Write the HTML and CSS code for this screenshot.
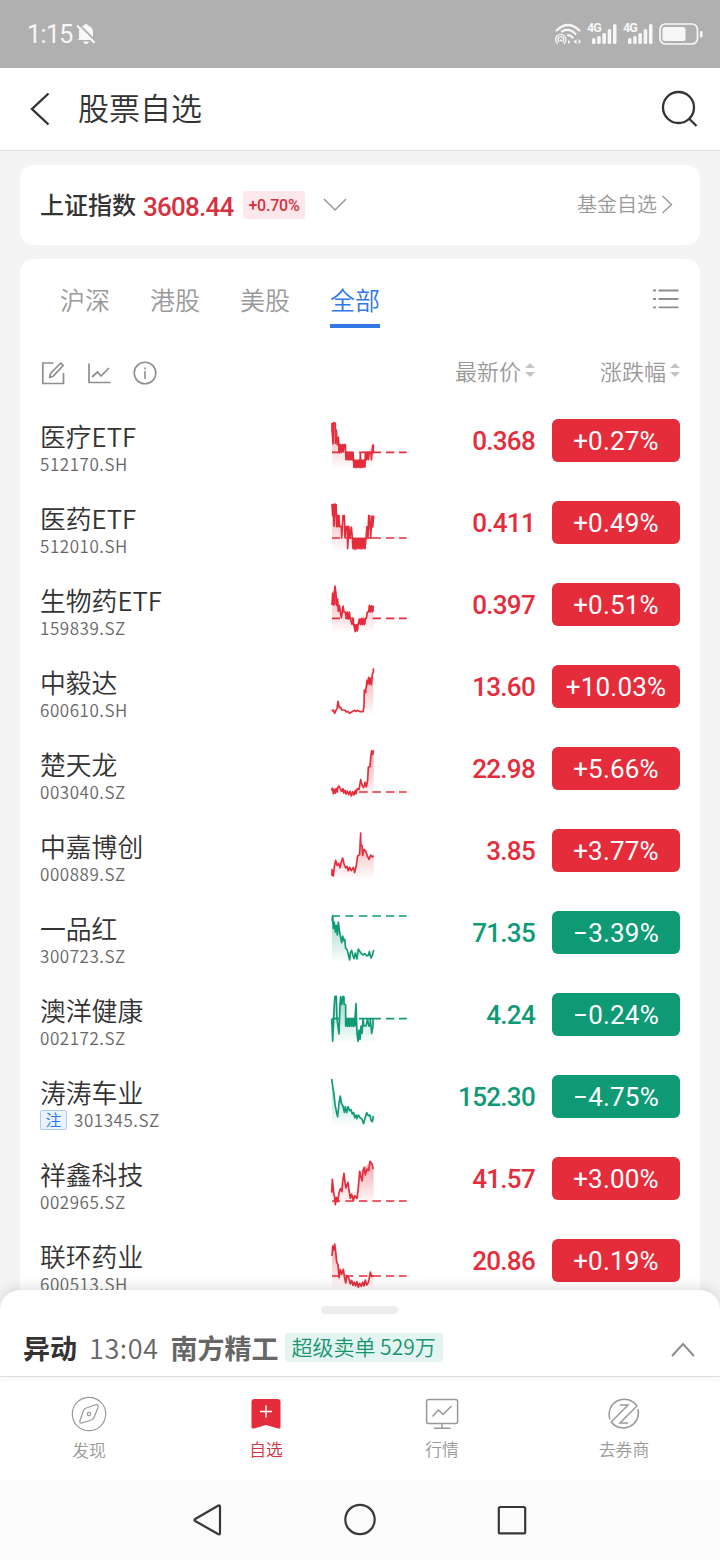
FILE: index.html
```html
<!DOCTYPE html>
<html lang="zh-CN">
<head>
<meta charset="utf-8">
<title>股票自选</title>
<link rel="stylesheet" href="styles.css">
</head>
<body>
<svg class="defs" aria-hidden="true">
  <defs>
    <linearGradient id="up" x1="0" y1="0" x2="0" y2="1"><stop offset="0" stop-color="#e52c3b" stop-opacity=".42"/><stop offset="1" stop-color="#e52c3b" stop-opacity=".02"/></linearGradient>
    <linearGradient id="down" x1="0" y1="0" x2="0" y2="1"><stop offset="0" stop-color="#0f9a76" stop-opacity=".42"/><stop offset="1" stop-color="#0f9a76" stop-opacity=".02"/></linearGradient>
    <symbol id="signal" viewBox="0 0 32 24">
      <g fill="#f7f7f7"><rect x="5" y="16" width="3.500" height="6" rx="1.500"/><rect x="10.200" y="14" width="3.500" height="8" rx="1.500"/><rect x="15.400" y="11" width="3.500" height="11" rx="1.500"/><rect x="20.700" y="7" width="3.500" height="15" rx="1.500"/><rect x="26" y="2" width="3.500" height="20" rx="1.500"/></g>
    </symbol>
  </defs>
</svg>

<header class="status">
  <span class="clock">1:15</span>
  <svg class="bell" viewBox="0 0 20 22" width="20" height="22"><path d="M3 17V9Q3 3 8 2.500Q8 1 10 1Q12 1 12 2.500Q17 4 17 9V17H1.500V15.500Z" fill="#f7f7f7"/><path d="M7 18.500h6q-1 2.500-3 2.500t-3-2.500" fill="#f7f7f7"/><path d="M3.500 2.200L19.500 17.800" stroke="#b0b0b0" stroke-width="2"/><path d="M1.800 3.300L18 19.200" stroke="#f7f7f7" stroke-width="2" stroke-linecap="round"/></svg>
  <span class="grow"></span>
  <svg class="wifi" viewBox="0 0 28 22" width="28" height="22" fill="none" stroke="#f7f7f7" stroke-width="2.200" stroke-linecap="round"><path d="M2.500 7.500Q14-3.500 25.500 7.500"/><path d="M8 8.500Q15 4.500 21.500 11"/><path d="M14 12.200Q17 12.500 18.500 14.500"/><g stroke-width="1.300"><path d="M3.300 20.500A5.200 5.200 0 1 1 10.200 20.500"/><path d="M4.800 18.500A2.800 2.800 0 1 1 8.800 18.500"/></g><circle cx="6.800" cy="17.400" r="1.100" fill="#f7f7f7" stroke="none"/><path d="M14 17l2.500 2-2.500 2M22.500 16v5l-3-2.500zM24.500 16v5l2.500-2.500z" fill="#f7f7f7" stroke="none"/></svg>
  <span class="cell"><svg width="32" height="24"><use href="#signal"/></svg><b>4G</b></span>
  <span class="cell"><svg width="32" height="24"><use href="#signal"/></svg><b>4G</b></span>
  <svg class="battery" viewBox="0 0 44 22" width="44" height="22"><rect x="1" y="1" width="37.500" height="20" rx="5.500" fill="none" stroke="#f7f7f7" stroke-width="1.700"/><rect x="3.500" y="4" width="23" height="14" rx="2.500" fill="#f7f7f7"/><rect x="41" y="8" width="2.500" height="6.500" rx="1.200" fill="#f7f7f7"/></svg>
</header>

<nav class="titlebar">
  <svg class="back" viewBox="0 0 20 34" width="20" height="34" fill="none" stroke="#333" stroke-width="2.400"><path d="M18.500 1.500L2 17L18.500 32.500"/></svg>
  <h1>股票自选</h1>
  <svg class="search" viewBox="0 0 38 38" width="38" height="38" fill="none" stroke="#333" stroke-width="2.300"><circle cx="17.500" cy="17.500" r="15.500"/><path d="M28.500 29L35.500 36"/></svg>
</nav>

<main class="content">
  <section class="card index">
    <span class="index-name">上证指数</span>
    <span class="index-value">3608.44</span>
    <span class="index-change">+0.70%</span>
    <svg class="expand" viewBox="0 0 24 14" width="24" height="14" fill="none" stroke="#999" stroke-width="1.500"><path d="M1 1L12 12L23 1"/></svg>
    <span class="grow"></span>
    <span class="fund">基金自选</span>
    <svg class="go" viewBox="0 0 12 20" width="12" height="20" fill="none" stroke="#999" stroke-width="1.400"><path d="M1.500 2L10.500 10.500L1.500 19"/></svg>
  </section>

  <section class="card list">
    <div class="tabs">
      <span>沪深</span><span>港股</span><span>美股</span><span class="active">全部</span>
      <svg class="menu" viewBox="0 0 26 22" width="26" height="22" stroke="#8e8e8e" stroke-width="1.800"><path d="M0 2.500h3M5.500 2.500h20M0 11h3M5.500 11h20M0 19.300h3M5.500 19.300h20"/></svg>
    </div>
    <div class="tools">
      <svg viewBox="0 0 24 24" width="24" height="24" fill="none" stroke="#8e8e8e" stroke-width="1.700"><path d="M12.500 2H1.800V22.500H22.500V12"/><path d="M8.500 16.500L9.500 12.500L19.800 2L22.300 4.500L12 15.300Z" stroke-linejoin="round"/></svg>
      <svg viewBox="0 0 24 24" width="24" height="24" fill="none" stroke="#8e8e8e" stroke-width="1.700"><path d="M2 2.500V21.500H23.500M5 16L10.500 11L14 15L22 7"/></svg>
      <svg viewBox="0 0 24 24" width="24" height="24" fill="none" stroke="#8e8e8e" stroke-width="1.600"><circle cx="12" cy="12" r="10.800"/><path d="M12 10v8M12 6.500v2"/></svg>
      <span class="grow"></span>
      <span class="sort price-head">最新价<svg viewBox="0 0 10 16" width="10" height="16" fill="#c4c4c4"><path d="M0 6L5 1L10 6ZM0 10L5 15L10 10Z"/></svg></span>
      <span class="sort">涨跌幅<svg viewBox="0 0 10 16" width="10" height="16" fill="#c4c4c4"><path d="M0 6L5 1L10 6ZM0 10L5 15L10 10Z"/></svg></span>
    </div>

    <div class="row up">
      <div class="stock"><div class="name">医疗ETF</div><div class="code">512170.SH</div></div>
      <svg class="chart" viewBox="60 24 234 150"><path class="area" d="M66 42L72 50L80 80L88 105L106 105L110 127L130 150L165 150L172 127L191 107V170H66Z"/><path class="base" d="M66 127h24M106 127h24M147 127h66M228 127h25M267 127h23"/><path class="line" d="M66 38V58L69 102L71 38L76 40V100L79 60L82 105L85 82L88 128L91 104L94 128L97 104L100 126L102 104H106L108 149L111 127L114 150L117 127L120 150L123 127L126 150L129 127L132 172L135 150L138 173L141 150L144 172L147 150L150 173L151 128L153 172L156 150L159 172L162 150L165 171L166 127L169 150L172 127L175 149L178 127H183L184 149L188 106L190 125V103"/><path class="block" d="M84 104h14v23H84zM108 127h21v23h-21zM130 150h35v22h-35z"/></svg>
      <div class="price">0.368</div><div class="pct">+0.27%</div>
    </div>
    <div class="row up">
      <div class="stock"><div class="name">医药ETF</div><div class="code">512010.SH</div></div>
      <svg class="chart" viewBox="60 270 234 150"><path class="area" d="M66 284L80 300L90 345L126 352V418H66Z"/><path class="base" d="M66 384h24M106 384h24M167 384h46M228 384h25M267 384h23"/><path class="line" d="M66 282L68 317L70 283L72 349L75 282L78 284L80 350L82 316L84 350L87 317L89 350H94L95 384L99 317H103L105 383L108 350L112 350L113 416L116 349L120 383L124 351L127 384L129 416L132 384L135 418L138 384L141 417L144 384L147 416L150 384L153 417L156 384L159 416L162 384L165 416L168 384L171 350L174 383L176 317L179 317L182 383L186 318L188 351L191 317"/><path class="block" d="M67 283h13v34H67zM128 384h38v31h-38zM170 351h16v6h-16z"/></svg>
      <div class="price">0.411</div><div class="pct">+0.49%</div>
    </div>
    <div class="row up">
      <div class="stock"><div class="name">生物药ETF</div><div class="code">159839.SZ</div></div>
      <svg class="chart" viewBox="60 516 234 150"><path class="area" d="M66 550L76 530L84 590L98 590L112 620L126 630L137 660L160 640L178 600L191 590V664H66Z"/><path class="base" d="M66 625h24M106 625h24M188 625h25M228 625h25M267 625h23"/><path class="line" d="M66 585L68 550L71 585L73 550L75 528L78 551L80 586L83 567L85 604L88 586L91 606L94 623L97 606L99 588L102 606L106 606L109 624L112 606L115 627L118 606L121 627L126 643L129 625L132 648L136 665L139 645L142 663L145 640L148 627L151 644L154 625L157 644L160 625L163 643L166 625L169 625L172 606L176 606L178 586L181 606L184 587L187 605L190 587"/><path class="block" d="M66 550h11v34H66zM147 626h20v17h-20zM178 588h13v17h-13zM132 643h12v9h-12z"/></svg>
      <div class="price">0.397</div><div class="pct">+0.51%</div>
    </div>
    <div class="row up">
      <div class="stock"><div class="name">中毅达</div><div class="code">600610.SH</div></div>
      <svg class="chart" viewBox="60 42 234 150"><path class="area" d="M66 183L75 184L84 155L94 179L120 187L160 185L164 120L174 82L182 104L190 56V191H66Z"/><path class="line" d="M65 183L70 180L74 190L78 180L81 177L84 154L88 173L92 172L95 180L104 180L109 186L113 184L118 190L125 186L134 181L138 184L142 181L151 185H159L162 168L163 120L167 128L171 91L173 103L176 82L179 102L182 84L184 104L187 72L190 66V55"/></svg>
      <div class="price">13.60</div><div class="pct">+10.03%</div>
    </div>
    <div class="row up">
      <div class="stock"><div class="name">楚天龙</div><div class="code">003040.SZ</div></div>
      <svg class="chart" viewBox="60 288 234 150"><path class="area" d="M66 420L88 412L120 430L145 420L153 392L162 411L173 385L177 350L186 303H191V440H66Z"/><path class="base" d="M147 426h26M187 426h26M228 426h25M267 426h23"/><path class="line" d="M65 422L67 414L70 431L72 418L76 430L78 416L82 426L83 412L87 408L91 417L95 424L99 416L101 429L105 421L108 432L112 423L116 434L120 424L124 438L128 425L132 435L136 421L138 431L142 416L147 418L149 407L152 389L156 404L161 413L165 397L169 411L173 391L175 351L180 350L182 323L185 302L188 313L191 301"/></svg>
      <div class="price">22.98</div><div class="pct">+5.66%</div>
    </div>
    <div class="row up">
      <div class="stock"><div class="name">中嘉博创</div><div class="code">000889.SZ</div></div>
      <svg class="chart" viewBox="60 534 234 150"><path class="area" d="M66 665L78 635L95 633L107 655L133 658L144 620L152 550L156 602L166 600L176 620L191 618V685H66Z"/><path class="line" d="M66 678V659L70 678L73 650L77 631L81 646L86 641L90 653L94 636L98 624L102 642L107 654L111 649L115 662L119 652L124 662L130 652L134 668L139 646L143 618L149 614L152 549V584L156 586L158 616L162 598L167 603L172 618L177 628L182 615L187 621L191 617"/></svg>
      <div class="price">3.85</div><div class="pct">+3.77%</div>
    </div>
    <div class="row down">
      <div class="stock"><div class="name">一品红</div><div class="code">300723.SZ</div></div>
      <svg class="chart" viewBox="60 30 234 150"><path class="area" d="M66 48L80 90L86 70L95 120L103 110L118 175L130 160L148 150L176 165L191 150V182H66Z"/><path class="base" d="M66 48h24M106 48h24M147 48h25M187 48h26M228 48h25M267 48h23"/><path class="line" d="M66 63L68 47L70 85L73 66L76 96L79 76L82 105L85 66L89 99L92 112L95 128L98 108L101 122L104 118L107 145L112 151L115 164L119 180L121 158L125 151L128 164L132 176L136 159L141 177L145 147L151 157L158 165L164 161L171 168L175 166L178 155L183 174L187 166L191 150"/></svg>
      <div class="price">71.35</div><div class="pct">−3.39%</div>
    </div>
    <div class="row down">
      <div class="stock"><div class="name">澳洋健康</div><div class="code">002172.SZ</div></div>
      <svg class="chart" viewBox="60 276 234 150"><path class="area" d="M66 356L77 290L87 400L92 292L102 292L108 356H135L145 400L155 378H191V426H66Z"/><path class="base" d="M66 356h24M106 356h32M147 356h66M228 356h25M267 356h23"/><path class="line" d="M65 356L68 424L73 311L75 289H79L81 356L84 379L87 402L90 313L92 290L95 314L99 289L102 291V312L107 315V378L110 356L113 379L116 356L119 379L122 356L125 378L128 356L131 379L135 356L138 311L141 400L144 424L147 390L150 418L153 378L156 400L159 357L162 378H168L173 357L176 378H180L181 357L185 400L189 378V357"/><path class="block" d="M108 356h31v23h-31z"/></svg>
      <div class="price">4.24</div><div class="pct">−0.24%</div>
    </div>
    <div class="row down">
      <div class="stock"><div class="name">涛涛车业</div><div class="code"><span class="tag">注</span>301345.SZ</div></div>
      <svg class="chart" viewBox="60 522 234 150"><path class="area" d="M66 538L82 650L91 589L100 625L116 628L130 645L160 665L173 640L191 650V673H66Z"/><path class="line" d="M65 537L69 565L72 581L75 614L80 639L83 650L87 609L91 588L94 609L99 618L103 637L106 620L110 638L114 620L119 632L123 629L127 642L131 638L134 653L138 645L141 656L145 645L150 653L155 656L161 671L165 655L170 638L175 647L180 645L183 661L187 665L190 648"/></svg>
      <div class="price">152.30</div><div class="pct">−4.75%</div>
    </div>
    <div class="row up">
      <div class="stock"><div class="name">祥鑫科技</div><div class="code">002965.SZ</div></div>
      <svg class="chart" viewBox="60 48 234 150"><path class="area" d="M66 120L76 190L92 145L101 100L120 170L140 175L150 95L182 65L191 87V190H66Z"/><path class="base" d="M66 183h24M106 183h24M147 183h25M187 183h26M228 183h25M267 183h23"/><path class="line" d="M65 158L67 118L71 157L74 173L76 194L79 172L83 185L87 158L91 146L96 155L98 124L102 100L105 128L108 144L114 127L117 151L121 175L125 162L130 182L134 167L141 175L145 142L149 94L153 112L156 123L160 88L163 82L166 105L171 87L176 92L180 64L185 70L190 87"/></svg>
      <div class="price">41.57</div><div class="pct">+3.00%</div>
    </div>
    <div class="row up">
      <div class="stock"><div class="name">联环药业</div><div class="code">600513.SH</div></div>
      <svg class="chart" viewBox="60 294 234 150"><path class="area" d="M66 330L74 310L84 375L101 392L112 410L145 435L175 430L181 399L191 407V443H66Z"/><path class="base" d="M66 408h24M106 408h24M147 408h25M187 408h26M228 408h25M267 408h23"/><path class="line" d="M66 348L68 318L71 330L74 312L77 334L80 367L84 374L87 413L91 389L95 403L100 388L103 409L107 429L111 407L116 413L121 432L125 421L129 436L133 426L137 438L141 425L145 442L149 430L154 439L158 426L162 438L166 420L170 435L174 430L177 419L181 396L185 410L191 406"/></svg>
      <div class="price">20.86</div><div class="pct">+0.19%</div>
    </div>
  </section>
</main>

<section class="sheet">
  <div class="handle"></div>
  <div class="alert">
    <b class="alert-title">异动</b><span class="alert-time">13:04</span><b class="alert-stock">南方精工</b><span class="alert-tag">超级卖单 529万</span>
    <span class="grow"></span>
    <svg class="collapse" viewBox="0 0 24 16" width="24" height="16" fill="none" stroke="#8e8e8e" stroke-width="2"><path d="M1 14L12 2L23 14"/></svg>
  </div>
</section>

<nav class="tabbar">
  <div class="tab t1"><svg viewBox="0 0 36 36" width="36" height="36" fill="none" stroke="#999" stroke-width="1.200"><circle cx="18" cy="18" r="16.700"/><path d="M14 12.500L24.500 8.800Q28 8 27 11.500L23 21.500Q22.500 23 21 23.700L11 27Q8 27.500 9 24.500L12.500 14.500Q13 13 14 12.500Z"/><circle cx="18" cy="18" r="1.700"/></svg><span>发现</span></div>
  <div class="tab t2 on"><svg viewBox="0 0 36 36" width="36" height="36"><path d="M6.500 3H29.500Q32.500 3 32.500 6V31Q32.500 33 30 32.500L18 29L6 32.500Q3.500 33 3.500 31V6Q3.500 3 6.500 3Z" fill="#e52c3b"/><path d="M12 15.500H24M18 9.500V21.500" stroke="#fff" stroke-width="1.500"/></svg><span>自选</span></div>
  <div class="tab t3"><svg viewBox="0 0 36 36" width="36" height="36" fill="none" stroke="#999" stroke-width="1.500"><rect x="2.600" y="3.500" width="31" height="24" rx="2"/><path d="M18 27.500V32.300M10 32.300H26.500M8.500 20.500L14.500 14L19 18.500L27.500 10"/></svg><span>行情</span></div>
  <div class="tab t4"><svg viewBox="0 0 36 36" width="36" height="36" fill="none" stroke="#999" stroke-width="1.500"><path d="M4 23.500A15.200 15.200 0 0 1 31 10L14 27H22"/><path d="M32 13A15.200 15.200 0 0 1 5.200 26L22 9H14"/></svg><span>去券商</span></div>
</nav>

<footer class="sysnav">
  <svg viewBox="0 0 32 36" width="32" height="36" fill="none" stroke="#383838" stroke-width="2.200" stroke-linejoin="round"><path d="M3.200 17L26 3.700Q28 2.700 28 5V31Q28 33 26 32L3.200 19Q1.700 18 3.200 17Z"/></svg>
  <svg viewBox="0 0 36 36" width="36" height="36" fill="none" stroke="#383838" stroke-width="2.200"><circle cx="18" cy="17.500" r="14.700"/></svg>
  <svg viewBox="0 0 32 36" width="32" height="36" fill="none" stroke="#383838" stroke-width="2.200"><rect x="2.800" y="5" width="26.400" height="26.400" rx="1.500"/></svg>
</footer>
</body>
</html>
```
FILE: styles.css
```css
* { box-sizing: border-box; }
body {
  margin: 0; width: 720px; height: 1560px; overflow: hidden;
  display: flex; flex-direction: column;
  background: #f4f4f4; color: #333;
  font-family: "Noto Sans CJK SC", sans-serif; font-weight: 350;
}
svg { display: block; flex: none; }
.defs { position: absolute; width: 0; height: 0; }
.grow { flex: 1; }

.status { height: 68px; flex: none; background: #b0b0b0; color: #f7f7f7; display: flex; align-items: center; padding: 0 17px 0 27px; }
.clock { font: 400 25px/30px Roboto, sans-serif; letter-spacing: -.6px; width: 45px; padding-top: 1px; }
.bell { margin: 0 0 0 4px; }
.wifi { margin-right: 5px; }
.cell { position: relative; margin-right: 4px; }
.cell b { position: absolute; left: 0; top: 0; font: 700 12.500px/12px Roboto, sans-serif; letter-spacing: -1px; }

.titlebar { height: 83px; flex: none; background: #fff; border-bottom: 1px solid #dedede; display: flex; align-items: center; padding: 0 21px 0 30px; }
.titlebar h1 { flex: 1; margin: -4px 0 0 28px; font-size: 31px; line-height: 40px; font-weight: 350; }

.content { flex: none; height: 1159px; padding: 14px 20px 0; overflow: hidden; }
.card { background: #fff; border-radius: 14px; }
.index { height: 80px; display: flex; align-items: center; padding: 0 27px 0 20px; }
.index-name { font-size: 24px; font-weight: 500; margin-top: -4px; }
.index-value { font: 500 26px/30px Roboto, sans-serif; letter-spacing: -.75px; color: #d43240; margin: 3px 0 0 7px; width: 91px; }
.index-change { font: 500 16px/29px Roboto, sans-serif; letter-spacing: -.2px; width: 62px; height: 28px; text-align: center; color: #d43240; background: #fce8ea; border-radius: 3px; margin-left: 9px; }
.expand { margin-left: 18px; }
.fund { font-size: 20px; color: #999; margin: -3px 4px 0 0; }
.go { margin-top: -2px; }

.list { margin-top: 14px; height: 1060px; padding: 0 20px; }
.tabs { height: 69px; display: flex; padding-left: 20px; gap: 40px; }
.tabs span { width: 50px; height: 69px; padding-top: 22px; font-size: 25px; line-height: 36px; color: #999; white-space: nowrap; }
.tabs .active { color: #3277e6; border-bottom: 4px solid #3277e6; }
.menu { margin: 29px 1px 0 auto; }
.tools { height: 72px; padding: 18px 0 0 1px; display: flex; align-items: center; gap: 22px; }
.tools .sort { display: flex; align-items: center; gap: 4px; font-size: 22px; line-height: 30px; color: #999; margin-top: -7px; }
.sort svg { margin-top: 1px; }
.price-head { margin-right: 43px; }

.row { height: 82px; display: flex; align-items: flex-start; }
.stock { width: 290px; }
.name { font-size: 25.800px; line-height: 36px; padding-top: 18px; }
.code { font-size: 17px; line-height: 20px; letter-spacing: .55px; color: #666; display: flex; align-items: center; }
.tag { width: 27px; height: 20px; border: 1px solid #a9cdf5; background: #e9f3fe; color: #3277e6; font-size: 16px; line-height: 17px; letter-spacing: 0; text-align: center; margin-right: 7px; border-radius: 2px; }
.chart { width: 78px; height: 50px; margin-top: 18px; overflow: visible; }
.line, .base { fill: none; stroke-width: 5; stroke-linejoin: round; }
.up { --tone: #e52c3b; --wash: url(#up); }
.down { --tone: #0f9a76; --wash: url(#down); }
.line, .base { stroke: var(--tone); }
.block { fill: var(--tone); }
.area { fill: var(--wash); }
.price { width: 127px; text-align: right; font: 500 26px/43px Roboto, sans-serif; letter-spacing: -.7px; margin-top: 20px; color: var(--tone); }
.pct { width: 128px; height: 43px; margin: 19px 0 0 17px; border-radius: 6px; background: var(--tone); color: #fff; font: 400 26px/44px Roboto, sans-serif; letter-spacing: .2px; text-align: center; }

.sheet { position: relative; flex: none; height: 87px; margin-top: -20px; background: #fff; border-radius: 20px 20px 0 0; border-bottom: 1px solid #dedede; box-shadow: 0 -3px 12px rgba(0,0,0,.12); padding: 16px 25px 0 23px; }
.handle { width: 77px; height: 8px; border-radius: 4px; background: #ededed; margin: 0 auto; }
.alert { display: flex; align-items: center; height: 36px; margin-top: 15px; white-space: nowrap; }
.alert-title { font-size: 27px; font-weight: 700; }
.alert-time { font-size: 27px; letter-spacing: .6px; color: #666; margin-left: 12px; }
.alert-stock { font-size: 27px; font-weight: 700; color: #666; margin-left: 12px; }
.alert-tag { width: 158px; height: 29px; line-height: 27px; text-align: center; margin-left: 6px; font-size: 21px; color: #16946f; background: #e4f4f0; border-radius: 4px; }
.collapse { margin-top: 6px; }

.tabbar { height: 102px; flex: none; background: #fff; display: flex; padding-left: 49px; }
.tab { width: 80px; padding-top: 19px; display: flex; flex-direction: column; align-items: center; color: #999; font-size: 16.800px; line-height: 24px; }
.tab svg { margin-bottom: 5px; }
.t1 span { margin-top: 1px; }
.t2 { margin-left: 97px; }
.t3 { margin-left: 96px; }
.t4 { margin-left: 102px; }
.tab.on { color: #d43240; }

.sysnav { flex: 1; background: #fcfcfc; display: flex; align-items: center; justify-content: center; gap: 118px; }
```
